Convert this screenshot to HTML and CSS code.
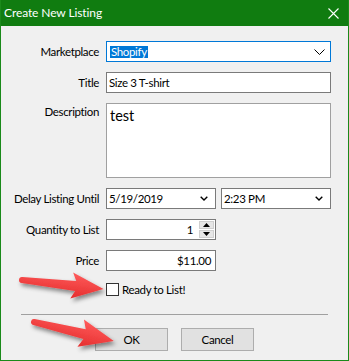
FILE: index.html
```html
<!DOCTYPE html>
<html>
<head>
<meta charset="utf-8">
<link rel="stylesheet" href="styles.css">
</head>
<body>
<div class="window">
  <div class="titlebar">
    <span class="title">Create New Listing</span>
    <svg class="close" width="11" height="11" viewBox="0 0 11 11"><path d="M0.5 0.5 L10.5 10.5 M10.5 0.5 L0.5 10.5" stroke="#fff" stroke-width="1.1" fill="none"/></svg>
  </div>
  <div class="content">
    <div class="form">
      <div class="lbl">Marketplace</div>
      <div class="field combo focus"><span class="sel">Shopify</span>
        <svg class="chev-big" width="11" height="6" viewBox="0 0 11 6"><path d="M0.5 0.5 L5.5 5.5 L10.5 0.5" stroke="#000" stroke-width="1" fill="none"/></svg>
      </div>

      <div class="lbl">Title</div>
      <div class="field text">Size 3 T-shirt</div>

      <div class="lbl top">Description</div>
      <div class="field area">test</div>

      <div class="lbl">Delay Listing Until</div>
      <div class="pair">
        <div class="field picker"><span>5/19/2019</span>
          <svg class="chev" width="8" height="5" viewBox="0 0 8 5"><path d="M0.7 0.7 L4 4 L7.3 0.7" stroke="#000" stroke-width="1.4" fill="none"/></svg>
        </div>
        <div class="field picker"><span>2:23 PM</span>
          <svg class="chev" width="8" height="5" viewBox="0 0 8 5"><path d="M0.7 0.7 L4 4 L7.3 0.7" stroke="#000" stroke-width="1.4" fill="none"/></svg>
        </div>
      </div>

      <div class="lbl">Quantity to List</div>
      <div class="field num short spinfield"><span class="val">1</span>
        <div class="spin">
          <div class="sbtn"><svg width="7" height="4" viewBox="0 0 7 4"><path d="M0 4 L3.5 0 L7 4 Z" fill="#000"/></svg></div>
          <div class="sbtn"><svg width="7" height="4" viewBox="0 0 7 4"><path d="M0 0 L3.5 4 L7 0 Z" fill="#000"/></svg></div>
        </div>
      </div>

      <div class="lbl">Price</div>
      <div class="field num short"><span class="val">$11.00</span></div>

      <div class="spacer"></div>
      <div class="check"><span class="box"></span><span>Ready to List!</span></div>
    </div>
    <div class="sep"></div>
    <div class="buttons">
      <div class="btn">OK</div>
      <div class="btn">Cancel</div>
    </div>
  </div>
  <svg class="arrows" width="349" height="361" viewBox="0 0 349 361">
    <defs>
      <filter id="sh" x="-20%" y="-50%" width="140%" height="200%">
        <feDropShadow dx="2" dy="3" stdDeviation="2" flood-color="#000" flood-opacity="0.45"/>
      </filter>
      <linearGradient id="rg" x1="0" y1="0" x2="0" y2="1">
        <stop offset="0" stop-color="#ff5a5a"/>
        <stop offset="1" stop-color="#e52e2e"/>
      </linearGradient>
    </defs>
    <g filter="url(#sh)">
      <g transform="translate(22 280) rotate(6.3)">
        <path d="M0 -3 L54 -5 L50 -13 L82 0 L50 13 L54 5 L0 3 A3 3 0 0 1 0 -3 Z" fill="url(#rg)"/>
      </g>
      <g transform="translate(34 322) rotate(13.4)">
        <path d="M0 -3 L52 -5 L48 -14 L82 0 L48 14 L52 5 L0 3 A3 3 0 0 1 0 -3 Z" fill="url(#rg)"/>
      </g>
    </g>
  </svg>
</div>
</body>
</html>
```

FILE: styles.css
```css
* { box-sizing: border-box; }
html, body { margin: 0; padding: 0; background: #f0f0f0; }
body {
  font-family: Lato, "Noto Sans", sans-serif;
  font-size: 11.5px;
  letter-spacing: -0.35px;
  color: #000;
}
.window {
  position: relative;
  width: 349px;
  height: 361px;
  background: #f0f0f0;
  border: 1px solid #1a8a1a;
  border-top: none;
  overflow: hidden;
}
.titlebar {
  height: 26px;
  margin: 0 -1px;
  background: #107c10;
  color: #fff;
  display: flex;
  align-items: center;
  justify-content: space-between;
  padding: 0 10px 1px 4px;
}
.title { font-size: 12px; letter-spacing: -0.1px; }
.close { display: block; margin-top: 1px; }
.content { padding-top: 15px; }
.form {
  display: grid;
  grid-template-columns: 98px 225px;
  column-gap: 7px;
  row-gap: 10px;
}
.lbl {
  text-align: right;
  align-self: center;
  line-height: 14px;
  white-space: nowrap;
}
.lbl.top { align-self: start; padding-top: 2px; }
.field {
  height: 21px;
  background: #fff;
  border: 1px solid #7a7a7a;
  display: flex;
  align-items: center;
  padding: 0 2px;
  white-space: nowrap;
}
.combo.focus { border-color: #0078d7; padding-left: 3px; }
.sel {
  background: #0078d7;
  color: #fff;
  line-height: 12px;
  height: 12px;
  padding: 0 1px;
}
.chev-big { margin-left: auto; margin-right: 3px; }
.area {
  height: 75px;
  align-items: flex-start;
  border-color: #a0a0a0;
  font-size: 14.5px;
  letter-spacing: 0;
  padding: 3px 3px;
  line-height: 18px;
}
.pair { display: flex; gap: 5px; }
.picker { width: 110px; padding-left: 2px; }
.chev { margin-left: auto; margin-right: 5px; }
.short { width: 110px; }
.num { justify-content: flex-end; padding-right: 4px; }
.spinfield { padding-right: 1px; }
.spinfield .val { margin-right: 6px; }
.spin {
  display: flex;
  flex-direction: column;
  gap: 1px;
  width: 15px;
  height: 17px;
}
.sbtn {
  flex: 1;
  background: #e6e6e6;
  border: 1px solid #cfcfcf;
  display: flex;
  align-items: center;
  justify-content: center;
}
.sbtn svg { display: block; }
.check {
  display: flex;
  align-items: center;
  gap: 3px;
  margin-top: 2px;
  height: 13px;
  line-height: 13px;
}
.box {
  width: 13px;
  height: 13px;
  border: 1px solid #333;
  background: #fff;
  flex: none;
}
.sep {
  height: 1px;
  background: #a0a0a0;
  margin: 18px 20px 0;
}
.buttons {
  display: flex;
  justify-content: center;
  gap: 13px;
  margin-top: 13px;
}
.btn {
  width: 73px;
  height: 23px;
  background: #e1e1e1;
  border: 1px solid #adadad;
  display: flex;
  align-items: center;
  justify-content: center;
}
.arrows {
  position: absolute;
  left: -1px;
  top: 0;
  pointer-events: none;
}
```
